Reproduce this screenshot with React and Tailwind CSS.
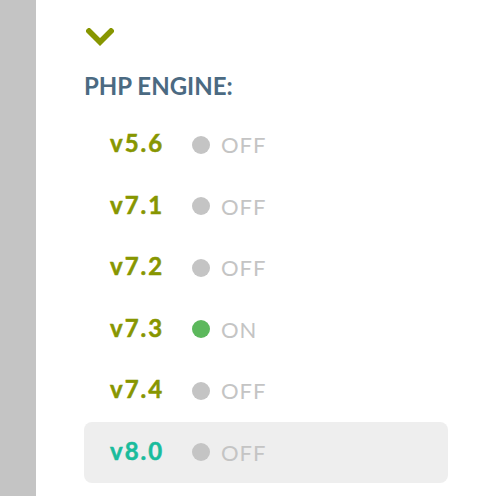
import React from "react";

const rows = [
  { v: "v5.6", on: false },
  { v: "v7.1", on: false },
  { v: "v7.2", on: false },
  { v: "v7.3", on: true },
  { v: "v7.4", on: false },
  { v: "v8.0", on: false, active: true },
];

export default function App() {
  return (
    <div className="flex h-[496px] w-[500px] overflow-hidden bg-white" style={{ fontFamily: "Lato, 'Open Sans', sans-serif" }}>
      <div className="w-[36px] shrink-0 bg-[#c4c4c4]" />
      <div className="flex flex-col pl-[48px] pt-[28px]">
        <div className="ml-[2px] h-[18px] w-[28px]">
          <svg width="28" height="18" viewBox="0 0 28 18">
            <path d="M3 3 L14 14 L25 3" fill="none" stroke="#879600" strokeWidth="5.5" strokeLinecap="square" />
          </svg>
        </div>
        <div className="mt-[28px] text-[24px] font-bold leading-[24px] text-[#4b6a82]">PHP ENGINE:</div>
        <div className="mt-[16px] flex flex-col">
          {rows.map((r) => (
            <div
              key={r.v}
              className={
                "flex h-[61.5px] w-[364px] items-center rounded-[8px] pl-[26px] " +
                (r.active ? "bg-[#eeeeee]" : "")
              }
            >
              <span
                className={
                  "mt-[-3px] w-[82px] text-[24px] font-bold tracking-[2px] [-webkit-text-stroke:0.5px] " +
                  (r.active ? "text-[#1abc9c]" : "text-[#879600]")
                }
              >
                {r.v}
              </span>
              <span className={"h-[18px] w-[18px] rounded-full " + (r.on ? "bg-[#5cb85c]" : "bg-[#c4c4c4]")} />
              <span className="ml-[11px] text-[22px] tracking-[1px] text-[#c4c4c4]">{r.on ? "ON" : "OFF"}</span>
            </div>
          ))}
        </div>
      </div>
    </div>
  );
}
